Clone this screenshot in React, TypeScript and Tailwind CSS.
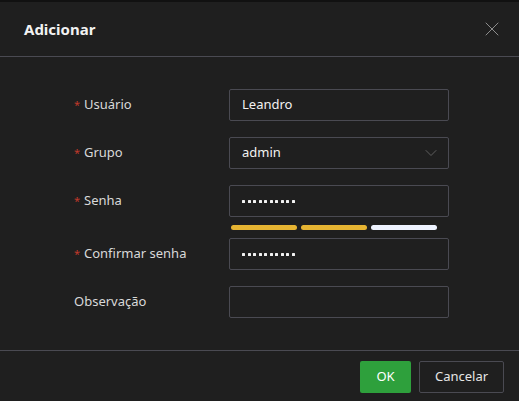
import { X, ChevronDown } from 'lucide-react';

interface Field {
  label: string;
  required: boolean;
  value?: string;
  kind: 'text' | 'select' | 'password';
}

const fields: Field[] = [
  { label: 'Usuário', required: true, value: 'Leandro', kind: 'text' },
  { label: 'Grupo', required: true, value: 'admin', kind: 'select' },
  { label: 'Senha', required: true, kind: 'password' },
  { label: 'Confirmar senha', required: true, kind: 'password' },
  { label: 'Observação', required: false, kind: 'text' },
];

function Dots() {
  return (
    <div className="flex gap-[2.5px]">
      {Array.from({ length: 10 }).map((_, i) => (
        <span key={i} className="block w-[3px] h-[3px] rounded-[0.5px] bg-[#f2f2f2]" />
      ))}
    </div>
  );
}

function FieldRow({ field, className = '' }: { field: Field; className?: string }) {
  return (
    <div className={`flex items-center h-8 ${className}`}>
      <div className="w-[155px] flex items-center text-[13px] text-[#d9d9d9]">
        {field.required && <span className="w-[10px] text-[#c0392b] text-[11px] leading-none -mt-[2px]">*</span>}
        <span>{field.label}</span>
      </div>
      <div
        className={`w-[220px] h-8 border border-[#4a4a52] rounded-[2px] flex items-center pl-3 text-[13px] text-[#f2f2f2] ${
          field.kind === 'select' ? 'pr-[7px]' : 'pr-3'
        }`}
      >
        {field.kind === 'password' ? <Dots /> : <span className="flex-1">{field.value}</span>}
        {field.kind === 'select' && <ChevronDown className="w-5 h-5 text-[#6a6a6a]" strokeWidth={1} />}
      </div>
    </div>
  );
}

export default function App() {
  return (
    <div
      className="w-[519px] h-[401px] bg-[#1f1f1f] border-t-2 border-[#111111] flex flex-col"
      style={{ fontFamily: '"Noto Sans", "Open Sans", sans-serif' }}
    >
      <div className="h-[55px] flex items-center justify-between pl-6 pr-[15px] border-b border-[#4a4a52]">
        <span className="text-[15px] font-bold text-[#f2f2f2]">Adicionar</span>
        <X className="w-6 h-6 text-[#9a9a9a]" strokeWidth={0.9} />
      </div>

      <div className="flex-1 pt-8 pl-[74px]">
        <FieldRow field={fields[0]} />
        <FieldRow field={fields[1]} className="mt-4" />
        <FieldRow field={fields[2]} className="mt-4" />
        {/* password strength meter */}
        <div className="flex gap-1 ml-[157px] mt-2">
          <span className="w-[66px] h-[5px] rounded-full bg-[#e6b432]" />
          <span className="w-[66px] h-[5px] rounded-full bg-[#e6b432]" />
          <span className="w-[66px] h-[5px] rounded-full bg-[#eef3ff]" />
        </div>
        <FieldRow field={fields[3]} className="mt-2" />
        <FieldRow field={fields[4]} className="mt-4" />
      </div>

      <div className="h-[51px] border-t border-[#4a4a52] flex justify-end items-start pt-[10px] pr-[15px] gap-2">
        <button className="w-[51px] h-8 bg-[#2ea03c] rounded-[2px] text-[13px] text-white">OK</button>
        <button className="w-[85px] h-8 border border-[#4a4a52] rounded-[2px] text-[13px] text-[#e6e6e6]">Cancelar</button>
      </div>
    </div>
  );
}
